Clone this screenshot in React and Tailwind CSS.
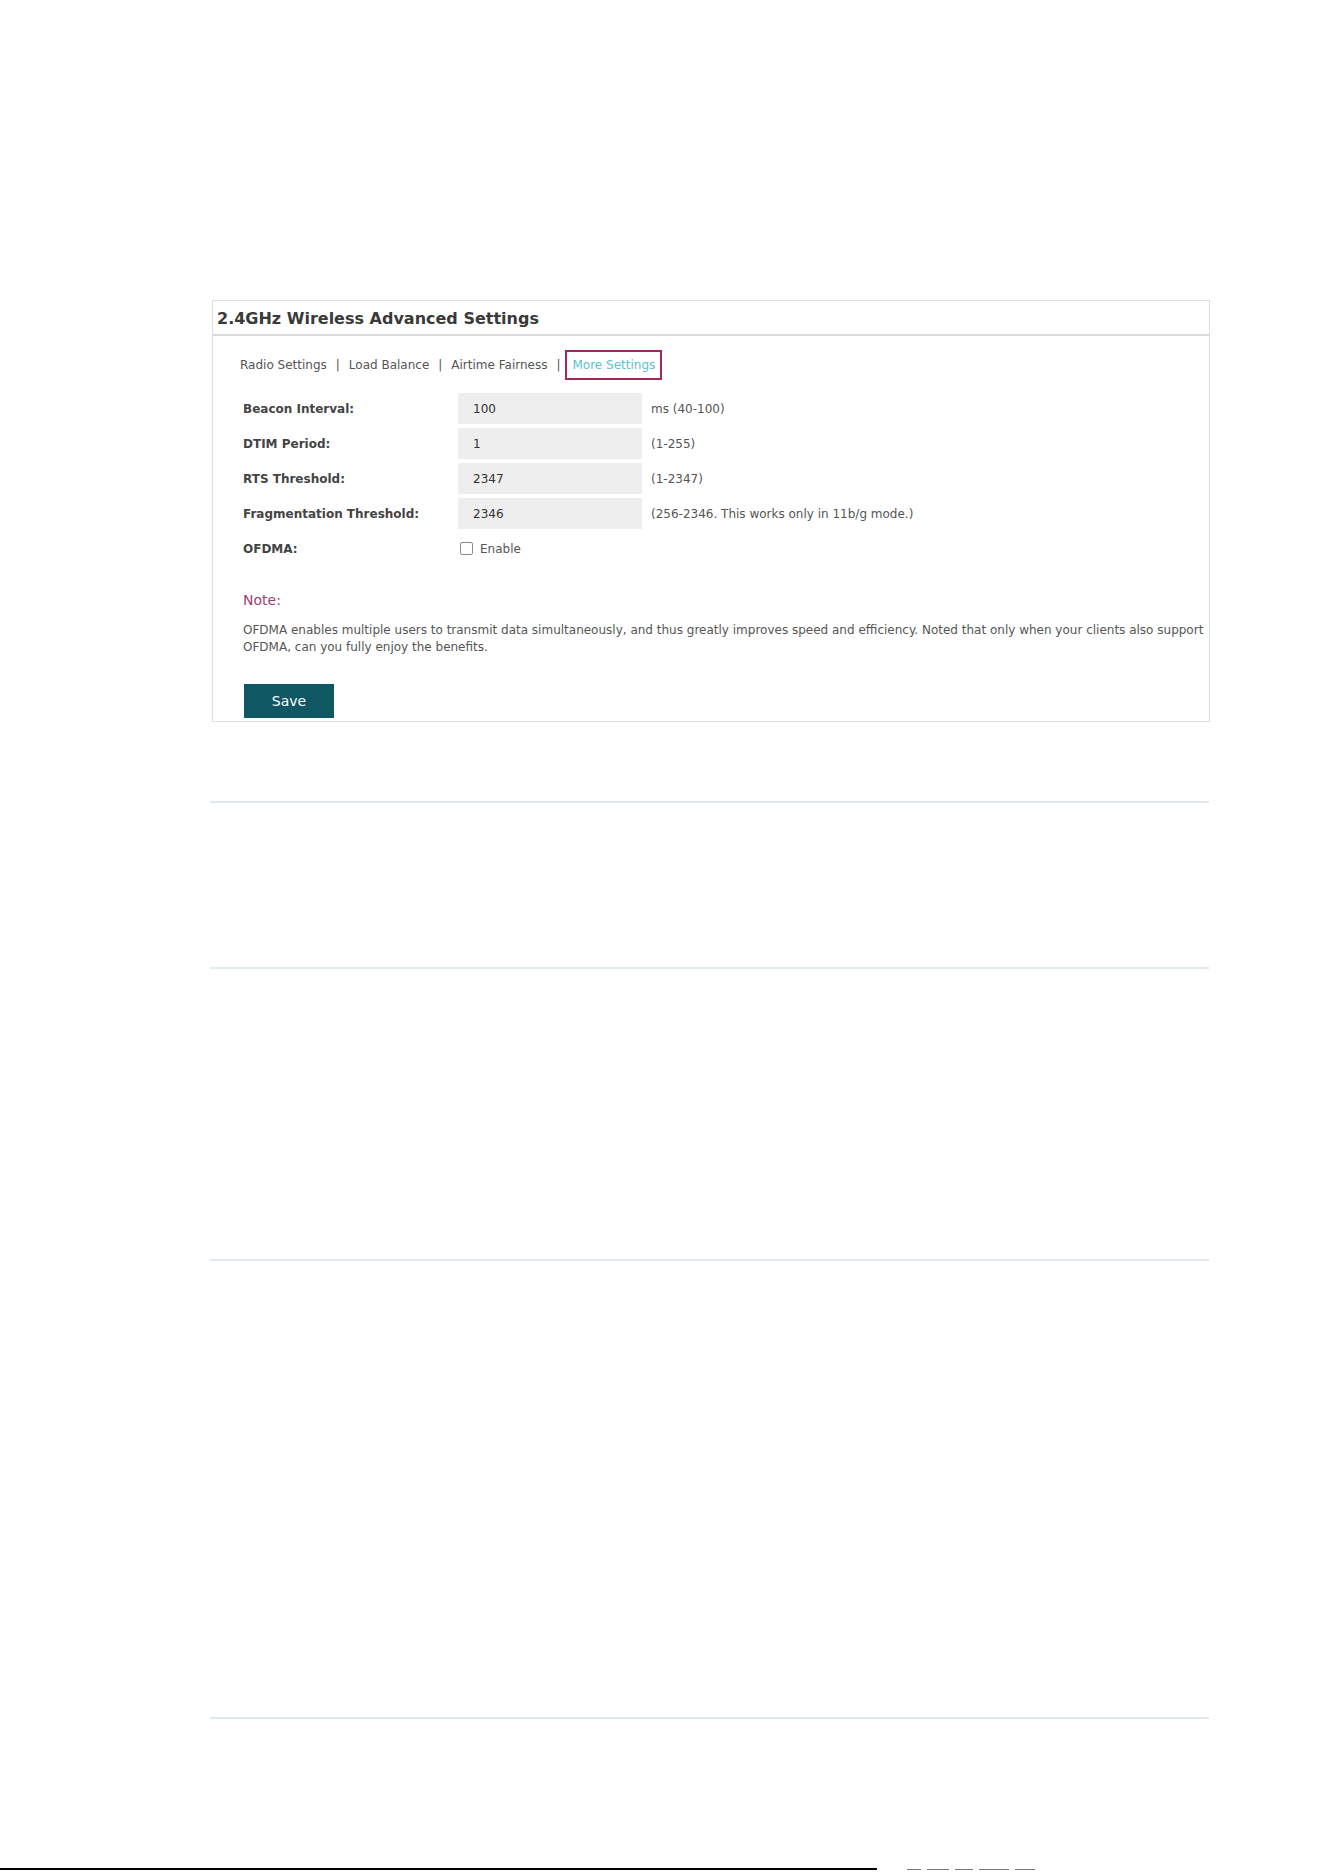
import React from 'react'

const font = { fontFamily: '"DejaVu Sans", Verdana, sans-serif' }

const rows = [
  { label: 'Beacon Interval', value: '100', hint: 'ms (40-100)' },
  { label: 'DTIM Period', value: '1', hint: '(1-255)' },
  { label: 'RTS Threshold', value: '2347', hint: '(1-2347)' },
  { label: 'Fragmentation Threshold', value: '2346', hint: '(256-2346. This works only in 11b/g mode.)' },
]

const tabs = ['Radio Settings', 'Load Balance', 'Airtime Fairness']

const Divider = ({ className }) => (
  <div className={`ml-[210px] w-[999px] h-[2px] bg-[#e1eaef] ${className}`} />
)

const SettingsPanel = () => (
  <div
    className="ml-[212px] w-[998px] h-[422px] border border-[#dedede] overflow-hidden bg-white"
    style={font}
  >
    {/* header */}
    <div className="h-[33px] flex items-center pl-[4px] pt-[3px]">
      <h2 className="text-[16px] font-bold text-[#3a3a3a]">
        2.4GHz Wireless Advanced Settings
      </h2>
    </div>
    <div className="h-[2px] bg-[#dadada]" />

    {/* tabs */}
    <div className="mt-[14px] h-[30px] flex items-center pl-[27px] text-[12px] text-[#555]">
      {tabs.map((t) => (
        <React.Fragment key={t}>
          <span>{t}</span>
          <span className="mx-[9px]">|</span>
        </React.Fragment>
      ))}
      <span className="-ml-[4px] h-[30px] px-[5px] flex items-center border-2 border-[#a0285e] text-[#5bc3cc]">
        More Settings
      </span>
    </div>

    {/* form */}
    <div className="mt-[11px] pl-[30px] text-[12px]">
      {rows.map((r) => (
        <div key={r.label} className="h-[35px] flex items-center">
          <div className="w-[215px] font-bold text-[#444]">{r.label}:</div>
          <div className="w-[184px] h-[31px] bg-[#eeeeee] flex items-center pl-[15px] text-[#333]">
            {r.value}
          </div>
          <div className="ml-[9px] text-[#555]">{r.hint}</div>
        </div>
      ))}
      <div className="h-[35px] flex items-center">
        <div className="w-[215px] font-bold text-[#444]">OFDMA:</div>
        <div className="ml-[2px] w-[13px] h-[13px] border border-[#8a8a8a] rounded-[2px] bg-white" />
        <span className="ml-[7px] text-[#555]">Enable</span>
      </div>
    </div>

    {/* note */}
    <div className="pl-[30px] mt-[25px]">
      <div className="text-[14px] leading-[18px] text-[#a23b6e]">Note:</div>
      <div className="mt-[13px] text-[12px] leading-[17px] text-[#555] whitespace-nowrap">
        <div>
          OFDMA enables multiple users to transmit data simultaneously, and thus greatly improves speed and efficiency. Noted that only when your clients also support
        </div>
        <div>OFDMA, can you fully enjoy the benefits.</div>
      </div>
    </div>

    <div className="pl-[31px] mt-[28px]">
      <button className="w-[90px] h-[34px] bg-[#0e5763] text-white text-[14px]">Save</button>
    </div>
  </div>
)

export default function App() {
  return (
    <div className="w-[1324px] h-[1872px] bg-white overflow-hidden flex flex-col">
      <div className="h-[300px]" />
      <SettingsPanel />
      <Divider className="mt-[79px]" />
      <Divider className="mt-[164px]" />
      <Divider className="mt-[290px]" />
      <Divider className="mt-[456px]" />
      <div className="flex-1" />
      {/* page edge strip with the tops of the next line's marks */}
      <div className="h-[4px] flex items-start">
        <div className="w-[877px] h-[2px] bg-black" />
        <div className="ml-[30px] flex gap-[6px] pt-[1px]">
          <div className="w-[14px] h-[1px] bg-[#777]" />
          <div className="w-[22px] h-[1px] bg-[#777]" />
          <div className="w-[18px] h-[1px] bg-[#777]" />
          <div className="w-[30px] h-[1px] bg-[#777]" />
          <div className="w-[20px] h-[1px] bg-[#777]" />
        </div>
      </div>
    </div>
  )
}
